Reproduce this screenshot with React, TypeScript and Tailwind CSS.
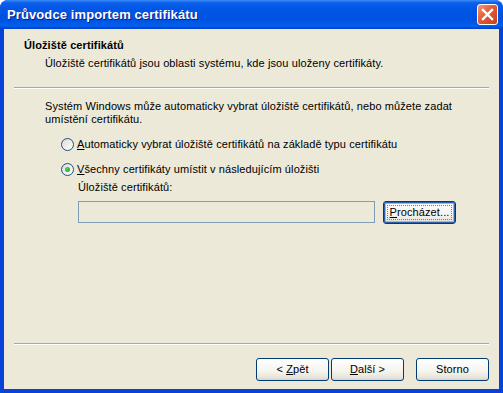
import React from 'react';

const font = "font-['Liberation_Sans',Arial,sans-serif]";

function Radio({ checked }: { checked?: boolean }) {
  return (
    <span className="w-[13px] h-[13px] rounded-full border border-[#1C5180] bg-[linear-gradient(135deg,#DCDBD5,#FFFFFF)] flex items-center justify-center shrink-0">
      {checked && <span className="w-[5px] h-[5px] rounded-full bg-[radial-gradient(circle_at_40%_40%,#55D551,#1A9A1A)]" />}
    </span>
  );
}

function XpButton({ children, focused }: { children: React.ReactNode; focused?: boolean }) {
  return (
    <button
      className={
        "w-[73px] h-[23px] rounded-[3px] border border-[#003C74] bg-[linear-gradient(180deg,#FFFFFF_0%,#F4F3EE_60%,#E6E3DA_90%,#D6D0C5_100%)] text-[11px] text-black flex items-center justify-center " +
        (focused ? "shadow-[inset_0_0_0_1px_#2E5FA8,inset_0_0_0_2px_#98B8EA]" : "")
      }
    >
      {focused ? (
        <span className="border border-dotted border-[#B07A10] px-[2px] leading-[13px]">{children}</span>
      ) : (
        <span className="leading-[13px]">{children}</span>
      )}
    </button>
  );
}

function Separator() {
  return (
    <div className="mx-[10px] shrink-0">
      <div className="h-px bg-[#ACA899]" />
      <div className="h-px bg-white" />
    </div>
  );
}

export default function App() {
  return (
    <div className={"w-[503px] h-[393px] flex flex-col bg-[#0842D8] rounded-t-[8px] overflow-hidden " + font}>
      {/* Title bar */}
      <div className="h-[29px] shrink-0 flex items-center justify-between pl-[7px] pr-[5px] bg-[linear-gradient(180deg,#3C8CF8_0%,#0A5EEB_10%,#0055E5_35%,#0052E0_70%,#0060F0_88%,#0040C8_100%)]">
        <span className="text-white font-bold text-[13px] tracking-[0.1px] [text-shadow:1px_1px_0_#0A1E80]">
          Průvodce importem certifikátu
        </span>
        <div className="w-[21px] h-[21px] rounded-[3px] border border-white bg-[linear-gradient(135deg,#F29A7E_0%,#E35B35_45%,#C4401C_100%)] flex items-center justify-center">
          <svg width="13" height="13" viewBox="0 0 13 13">
            <path d="M2 2 L11 11 M11 2 L2 11" stroke="white" strokeWidth="2.4" strokeLinecap="square" />
          </svg>
        </div>
      </div>

      {/* Client area */}
      <div className="flex-1 mx-[4px] mb-[4px] bg-[#ECE9D8] flex flex-col text-[11px] leading-[13px] tracking-[0.1px] text-black">
        <div className="h-[58px] shrink-0 pt-[9px] pl-[20px]">
          <div className="font-bold leading-[14px]">Úložiště certifikátů</div>
          <div className="mt-[5px] pl-[21px]">Úložiště certifikátů jsou oblasti systému, kde jsou uloženy certifikáty.</div>
        </div>
        <Separator />

        <div className="flex-1 pt-[11px] pl-[41px]">
          <p>
            Systém Windows může automaticky vybrat úložiště certifikátů, nebo můžete zadat
            <br />
            umístění certifikátu.
          </p>
          <div className="mt-[12px] ml-[16px] flex flex-col gap-[12px]">
            <div className="flex items-center gap-[3px] h-[13px]">
              <Radio />
              <span>
                <u>A</u>utomaticky vybrat úložiště certifikátů na základě typu certifikátu
              </span>
            </div>
            <div className="flex items-center gap-[3px] h-[13px]">
              <Radio checked />
              <span>
                <u>V</u>šechny certifikáty umístit v následujícím úložišti
              </span>
            </div>
          </div>
          <div className="mt-[5px] ml-[33px]">Úložiště certifikátů:</div>
          <div className="mt-[7px] ml-[33px] flex items-start gap-[8px]">
            <div className="w-[297px] h-[22px] border border-[#7F9DB9] bg-[#ECE9D8]" />
            <XpButton focused>
              <u>P</u>rocházet...
            </XpButton>
          </div>
        </div>

        <Separator />
        <div className="h-[44px] shrink-0 pt-[13px] pr-[10px] flex justify-end items-start">
          <XpButton>
            &lt; <u>Z</u>pět
          </XpButton>
          <div className="ml-[2px]">
            <XpButton>
              <u>D</u>alší &gt;
            </XpButton>
          </div>
          <div className="ml-[12px]">
            <XpButton>Storno</XpButton>
          </div>
        </div>
      </div>
    </div>
  );
}
